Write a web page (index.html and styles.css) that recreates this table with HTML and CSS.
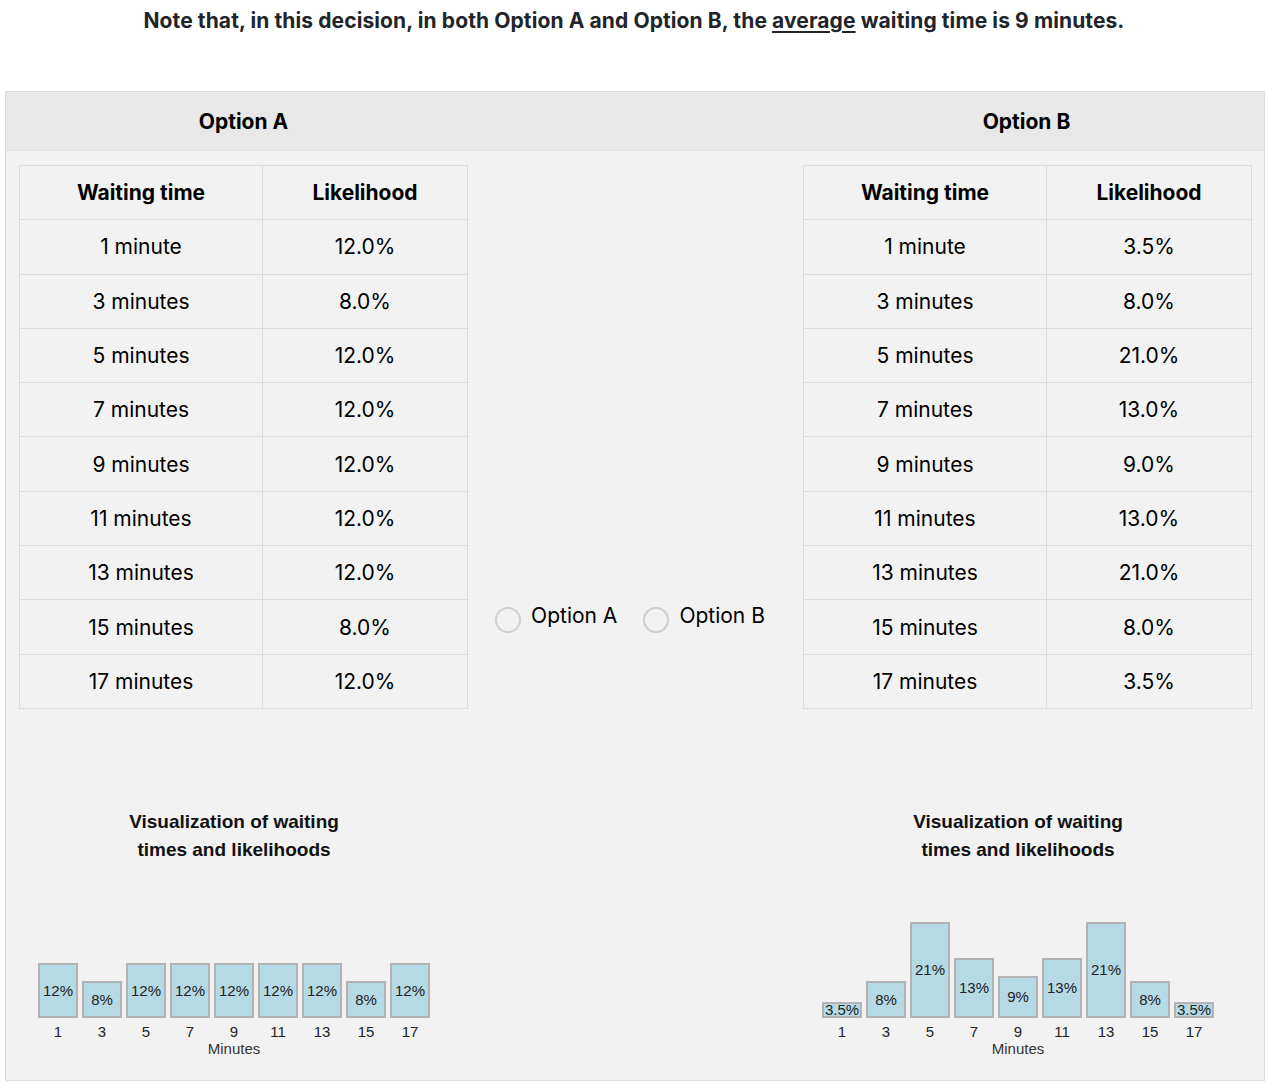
FILE: index.html
```html
<!DOCTYPE html>
<html lang="en">
<head>
<meta charset="utf-8">
<title>Decision</title>
<link rel="stylesheet" href="styles.css">
</head>
<body>
<h1 class="note">Note that, in this decision, in both Option A and Option B, the <u>average</u> waiting time is 9 minutes.</h1>

<div class="panel">
  <div class="panel-head">
    <div class="opt-title">Option A</div>
    <div></div>
    <div class="opt-title">Option B</div>
  </div>
  <div class="panel-body">
    <div class="col col-a">
      <table class="lt">
        <thead><tr><th class="c1">Waiting time</th><th class="c2">Likelihood</th></tr></thead>
        <tbody>
          <tr><td>1 minute</td><td>12.0%</td></tr>
          <tr><td>3 minutes</td><td>8.0%</td></tr>
          <tr><td>5 minutes</td><td>12.0%</td></tr>
          <tr><td>7 minutes</td><td>12.0%</td></tr>
          <tr><td>9 minutes</td><td>12.0%</td></tr>
          <tr><td>11 minutes</td><td>12.0%</td></tr>
          <tr><td>13 minutes</td><td>12.0%</td></tr>
          <tr><td>15 minutes</td><td>8.0%</td></tr>
          <tr><td>17 minutes</td><td>12.0%</td></tr>
        </tbody>
      </table>
      <div class="chart">
        <div class="chart-title">Visualization of waiting<br>times and likelihoods</div>
        <div class="plot">
          <div class="bar" style="height:55px"><span>12%</span></div>
          <div class="bar" style="height:37px"><span>8%</span></div>
          <div class="bar" style="height:55px"><span>12%</span></div>
          <div class="bar" style="height:55px"><span>12%</span></div>
          <div class="bar" style="height:55px"><span>12%</span></div>
          <div class="bar" style="height:55px"><span>12%</span></div>
          <div class="bar" style="height:55px"><span>12%</span></div>
          <div class="bar" style="height:37px"><span>8%</span></div>
          <div class="bar" style="height:55px"><span>12%</span></div>
        </div>
        <div class="ticks"><span>1</span><span>3</span><span>5</span><span>7</span><span>9</span><span>11</span><span>13</span><span>15</span><span>17</span></div>
        <div class="axis-label">Minutes</div>
      </div>
    </div>

    <div class="choice">
      <label class="radio"><span class="circle"></span><span class="rlabel">Option A</span></label>
      <label class="radio"><span class="circle"></span><span class="rlabel">Option B</span></label>
    </div>

    <div class="col col-b">
      <table class="lt">
        <thead><tr><th class="c1">Waiting time</th><th class="c2">Likelihood</th></tr></thead>
        <tbody>
          <tr><td>1 minute</td><td>3.5%</td></tr>
          <tr><td>3 minutes</td><td>8.0%</td></tr>
          <tr><td>5 minutes</td><td>21.0%</td></tr>
          <tr><td>7 minutes</td><td>13.0%</td></tr>
          <tr><td>9 minutes</td><td>9.0%</td></tr>
          <tr><td>11 minutes</td><td>13.0%</td></tr>
          <tr><td>13 minutes</td><td>21.0%</td></tr>
          <tr><td>15 minutes</td><td>8.0%</td></tr>
          <tr><td>17 minutes</td><td>3.5%</td></tr>
        </tbody>
      </table>
      <div class="chart">
        <div class="chart-title">Visualization of waiting<br>times and likelihoods</div>
        <div class="plot">
          <div class="bar" style="height:16px"><span>3.5%</span></div>
          <div class="bar" style="height:37px"><span>8%</span></div>
          <div class="bar" style="height:96px"><span>21%</span></div>
          <div class="bar" style="height:60px"><span>13%</span></div>
          <div class="bar" style="height:42px"><span>9%</span></div>
          <div class="bar" style="height:60px"><span>13%</span></div>
          <div class="bar" style="height:96px"><span>21%</span></div>
          <div class="bar" style="height:37px"><span>8%</span></div>
          <div class="bar" style="height:16px"><span>3.5%</span></div>
        </div>
        <div class="ticks"><span>1</span><span>3</span><span>5</span><span>7</span><span>9</span><span>11</span><span>13</span><span>15</span><span>17</span></div>
        <div class="axis-label">Minutes</div>
      </div>
    </div>
  </div>
</div>
</body>
</html>
```
FILE: styles.css
```css
html, body {
  margin: 0;
  padding: 0;
  background: #ffffff;
}
body {
  font-family: Inter, "Noto Sans", sans-serif;
  color: #000;
}
.note {
  margin: 0;
  padding: 9px 0 0;
  height: 91px;
  box-sizing: border-box;
  text-align: center;
  font-size: 21px;
  line-height: 24px;
  font-weight: 700;
  color: #212529;
  letter-spacing: 0.1px;
}
.note u {
  text-decoration-thickness: 2px;
  text-underline-offset: 3px;
}
.panel {
  margin: 0 3px 0 5px;
  border: 1px solid #dcdcdc;
  background: #f2f2f2;
}
.panel-head {
  display: grid;
  grid-template-columns: 475px 1fr 475px;
  height: 58px;
  background: #e8e8e8;
  border-bottom: 1px solid #dedede;
}
.opt-title {
  display: flex;
  align-items: center;
  justify-content: center;
  font-size: 21px;
  font-weight: 700;
}
.panel-body {
  display: grid;
  grid-template-columns: 475px 1fr 475px;
}
.col {
  display: flex;
  flex-direction: column;
}
.col-a {
  padding: 14px 14px 0 13px;
}
.col-b {
  padding: 14px 13px 0 14px;
}
.lt {
  width: 448px;
  border-collapse: collapse;
  table-layout: fixed;
  font-size: 21px;
}
.lt th, .lt td {
  border: 1px solid #dcdcdc;
  text-align: center;
  vertical-align: middle;
  height: 54.3px;
  padding: 0;
  box-sizing: border-box;
}
.lt th {
  font-weight: 700;
}
.lt td {
  font-weight: 400;
}
.lt .c1 { width: 243px; }
.lt .c2 { width: 205px; }

.chart {
  margin: 99px 0 0 19px;
  width: 392px;
  font-family: "Liberation Sans", Arial, sans-serif;
  color: #222;
  padding-bottom: 23px;
}
.chart-title {
  text-align: center;
  font-size: 19px;
  font-weight: 700;
  line-height: 28px;
  color: #111;
}
.plot {
  height: 154px;
  display: flex;
  align-items: flex-end;
  gap: 4px;
}
.bar {
  width: 40px;
  box-sizing: border-box;
  background: #b5d9e5;
  border: 2px solid #b3b3b3;
  display: flex;
  align-items: center;
  justify-content: center;
  font-size: 15px;
  line-height: 15px;
  overflow: visible;
  white-space: nowrap;
}
.ticks {
  display: flex;
  gap: 4px;
  margin-top: 5px;
  font-size: 15px;
  line-height: 17px;
}
.ticks span {
  width: 40px;
  text-align: center;
}
.axis-label {
  text-align: center;
  font-size: 15px;
  line-height: 17px;
  color: #333;
}
.choice {
  display: flex;
  align-items: center;
  justify-content: center;
  gap: 26px;
  padding-right: 10px;
}
.radio {
  display: flex;
  align-items: center;
  gap: 10px;
  font-size: 21px;
  cursor: pointer;
}
.circle {
  width: 26px;
  height: 26px;
  box-sizing: border-box;
  border: 2px solid #cfcfcf;
  border-radius: 50%;
  margin-top: 10px;
}
```
